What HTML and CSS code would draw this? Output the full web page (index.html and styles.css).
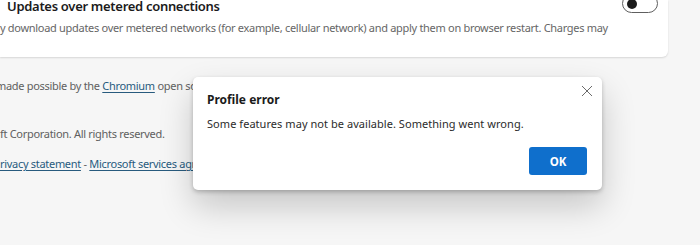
FILE: index.html
```html
<!DOCTYPE html>
<html>
<head>
<meta charset="utf-8">
<link rel="stylesheet" href="styles.css">
</head>
<body>
<div class="page">
  <section class="card">
    <div class="card-text">
      <div class="card-title">Updates over metered connections</div>
      <div class="card-desc">y download updates over metered networks (for example, cellular network) and apply them on browser restart. Charges may</div>
    </div>
    <div class="toggle"><span class="knob"></span></div>
  </section>
  <div class="about">
    <p class="line line-first">made possible by the <a class="link" href="#">Chromium</a> open source project and other open source software.</p>
    <p class="line line-copy">ft Corporation. All rights reserved.</p>
    <p class="line line-links"><a class="link" href="#">rivacy statement</a> - <a class="link" href="#">Microsoft services agreement</a></p>
  </div>
</div>
<div class="dialog" role="dialog">
  <button class="close" aria-label="Close">
    <svg width="12" height="12" viewBox="0 0 12 12"><path d="M1 1L11 11M11 1L1 11" stroke="#6b6b6b" stroke-width="1" fill="none"/></svg>
  </button>
  <h2 class="dialog-title">Profile error</h2>
  <p class="dialog-body">Some features may not be available. Something went wrong.</p>
  <div class="dialog-actions">
    <button class="ok">OK</button>
  </div>
</div>
</body>
</html>
```
FILE: styles.css
```css
html, body {
  margin: 0;
  padding: 0;
}
body {
  width: 700px;
  height: 245px;
  overflow: hidden;
  position: relative;
  background: #f6f6f6;
  font-family: "Noto Sans", "Open Sans", sans-serif;
  color: #333;
}
.page {
  display: flex;
  flex-direction: column;
}
.card {
  width: 668px;
  height: 57px;
  box-sizing: border-box;
  background: #fff;
  border-radius: 0 0 6px 0;
  box-shadow: 0 1px 2px rgba(0,0,0,0.13);
  display: flex;
  justify-content: space-between;
  align-items: flex-start;
  padding-right: 10px;
}
.card-text {
  display: flex;
  flex-direction: column;
  margin-top: -3px;
  min-width: 0;
}
.card-title {
  padding-left: 7px;
  font-size: 13px;
  font-weight: 600;
  letter-spacing: -0.3px;
  color: #1b1b1b;
  line-height: 18px;
}
.card-desc {
  margin-top: 5px;
  font-size: 11px;
  letter-spacing: -0.3px;
  color: #666;
  line-height: 16px;
  white-space: nowrap;
}
.toggle {
  margin-top: -6px;
  width: 36px;
  height: 19px;
  flex: none;
  box-sizing: border-box;
  border: 1px solid #5f5f5f;
  border-radius: 10px;
  display: flex;
  align-items: center;
  padding-left: 4px;
}
.knob {
  width: 10px;
  height: 10px;
  border-radius: 50%;
  background: #1b1b1b;
}
.about {
  padding-top: 21px;
  font-size: 11px;
  letter-spacing: -0.3px;
  color: #606060;
}
.line {
  margin: 0;
  line-height: 16px;
  white-space: nowrap;
}
.line-first { margin-left: -4px; }
.line-copy { margin-top: 32px; }
.line-links { margin-top: 14px; }
.link {
  color: #285b7e;
  text-decoration: underline;
  text-underline-offset: 2px;
}
.dialog {
  position: absolute;
  left: 193px;
  top: 77px;
  width: 409px;
  height: 113px;
  box-sizing: border-box;
  background: #fff;
  border-radius: 5px;
  box-shadow: 0 2px 4px rgba(0,0,0,0.22), 0 16px 34px rgba(0,0,0,0.2);
  padding: 14px 15px 15px 14px;
  display: flex;
  flex-direction: column;
}
.close {
  position: absolute;
  top: 7px;
  right: 8px;
  width: 14px;
  height: 14px;
  padding: 0;
  border: 0;
  background: transparent;
  display: flex;
  align-items: center;
  justify-content: center;
}
.dialog-title {
  margin: 0;
  font-size: 12px;
  font-weight: 700;
  color: #1b1b1b;
  line-height: 18px;
}
.dialog-body {
  margin: 7px 0 0;
  font-size: 11px;
  letter-spacing: 0.05px;
  color: #2b2b2b;
  line-height: 16px;
}
.dialog-actions {
  margin-top: auto;
  display: flex;
  justify-content: flex-end;
}
.ok {
  width: 58px;
  height: 28px;
  border: 0;
  border-radius: 3px;
  background: #0f6fcc;
  color: #fff;
  font-family: "Noto Sans", "Open Sans", sans-serif;
  font-size: 11.5px;
  font-weight: 700;
}
```
